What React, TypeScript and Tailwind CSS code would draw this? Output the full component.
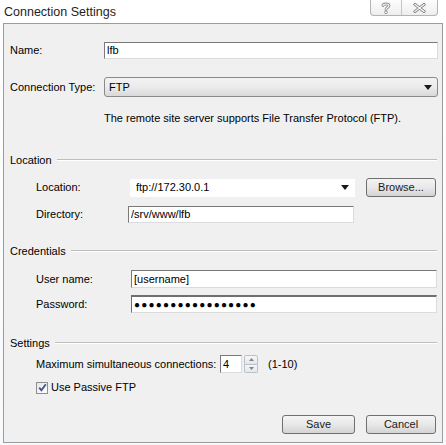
import React from 'react';

const font = { fontFamily: '"Liberation Sans", Arial, sans-serif' };

const SectionHeader = ({ title }: { title: string }) => (
    <div className="flex items-center h-[14px] pl-[6px] pr-[5px]">
        <span>{title}</span>
        <div className="flex-1 h-[2px] ml-[5px] border-t border-t-[#bdbdbd] border-b border-b-white" />
    </div>
);

const SunkenInput = ({ value, className = '' }: { value: string; className?: string }) => (
    <div className={`flex items-center bg-white border border-t-[#7a7a7a] border-l-[#7a7a7a] border-r-[#dcdcdc] border-b-[#dcdcdc] pl-[2px] ${className}`}>
        {value}
    </div>
);

const WinButton = ({ label, className = '' }: { label: string; className?: string }) => (
    <div className={`flex items-center justify-center h-[19px] rounded-[3px] border border-[#707070] bg-gradient-to-b from-[#f4f4f4] via-[#e8e8e8] to-[#d4d4d4] text-[11px] text-[#1b1b1b] ${className}`}>
        {label}
    </div>
);

const TitleGlyphs = () => (
    <div className="flex h-[16px] mr-[8px] rounded-b-[4px] border border-t-0 border-[#b4b4b4] bg-gradient-to-b from-[#fdfdfd] to-[#eeeeee] overflow-hidden">
        <div className="w-[31px] flex items-center justify-center border-r border-[#c4c4c4]">
            <svg width="10" height="12" viewBox="0 0 10 12">
                <path d="M2 3.5 C2 1.5 8 1.5 8 3.5 C8 5.5 5 5.5 5 7.5" fill="none" stroke="#8a8a8a" strokeWidth="2.8" strokeLinecap="round" />
                <path d="M2 3.5 C2 1.5 8 1.5 8 3.5 C8 5.5 5 5.5 5 7.5" fill="none" stroke="#ffffff" strokeWidth="1.1" strokeLinecap="round" />
                <circle cx="5" cy="10.3" r="1.4" fill="#ffffff" stroke="#8a8a8a" strokeWidth="0.9" />
            </svg>
        </div>
        <div className="w-[35px] flex items-center justify-center">
            <svg width="13" height="10" viewBox="0 0 13 10">
                <path d="M2 1.5 L11 8.5 M11 1.5 L2 8.5" stroke="#8a8a8a" strokeWidth="3" strokeLinecap="square" />
                <path d="M2 1.5 L11 8.5 M11 1.5 L2 8.5" stroke="#ffffff" strokeWidth="1.2" strokeLinecap="square" />
            </svg>
        </div>
    </div>
);

const Triangle = () => (
    <svg width="8" height="5" viewBox="0 0 8 5"><path d="M0 0 L8 0 L4 5 Z" fill="#1a1a1a" /></svg>
);

export default function App() {
    return (
        <div className="w-[446px] h-[445px] bg-gradient-to-b from-[#ffffff] to-[#f7f9fb] text-[11px] text-black overflow-hidden" style={font}>
            {/* Title bar */}
            <div className="flex justify-between h-[23px]">
                <div className="pl-[4px] pt-[3px] text-[12.5px] text-[#1e1e1e]">Connection Settings</div>
                <TitleGlyphs />
            </div>

            {/* Dialog body */}
            <div className="ml-[3px] w-[440px] h-[420px] border border-[#9c9c9c] bg-[#f0f0f0] flex flex-col">
                {/* Name */}
                <div className="flex items-center mt-[18px] pl-[6px] pr-[4px]">
                    <div className="w-[94px]">Name:</div>
                    <SunkenInput value="lfb" className="flex-1 h-[17px]" />
                </div>

                {/* Connection Type */}
                <div className="flex items-center mt-[18px] pl-[6px] pr-[4px]">
                    <div className="w-[94px]">Connection Type:</div>
                    <div className="flex-1 h-[20px] flex items-center justify-between rounded-[3px] border border-[#8a8a8a] bg-gradient-to-b from-[#f3f3f3] via-[#ebebeb] to-[#d9d9d9] pl-[4px] pr-[5px]">
                        <span>FTP</span>
                        <Triangle />
                    </div>
                </div>

                <div className="mt-[14px] h-[14px] pl-[100px] leading-[14px]">
                    The remote site server supports File Transfer Protocol (FTP).
                </div>

                {/* Location */}
                <div className="mt-[28px]"><SectionHeader title="Location" /></div>
                <div className="flex items-center mt-[11px] pl-[32px] pr-[6px]">
                    <div className="w-[94px]">Location:</div>
                    <div className="w-[225px] h-[18px] bg-white flex items-center justify-between pl-[6px] pr-[6px]">
                        <span>ftp://172.30.0.1</span>
                        <Triangle />
                    </div>
                    <WinButton label="Browse..." className="ml-[11px] w-[70px]" />
                </div>
                <div className="flex items-center mt-[9px] pl-[32px]">
                    <div className="w-[92px]">Directory:</div>
                    <SunkenInput value="/srv/www/lfb" className="w-[226px] h-[17px]" />
                </div>

                {/* Credentials */}
                <div className="mt-[21px]"><SectionHeader title="Credentials" /></div>
                <div className="flex items-center mt-[12px] pl-[32px] pr-[5px]">
                    <div className="w-[95px]">User name:</div>
                    <SunkenInput value="[username]" className="flex-1 h-[18px]" />
                </div>
                <div className="flex items-center mt-[7px] pl-[32px] pr-[5px]">
                    <div className="w-[95px]">Password:</div>
                    <div className="flex-1 h-[18px] flex items-center bg-white border border-t-2 border-t-[#6f6f6f] border-l-[#6f6f6f] border-r-[#dcdcdc] border-b-[#dcdcdc] pl-[2px] text-[10px] tracking-[1.2px]">
                        {'●'.repeat(17)}
                    </div>
                </div>

                {/* Settings */}
                <div className="mt-[23px]"><SectionHeader title="Settings" /></div>
                <div className="flex items-center mt-[5px] pl-[32px] h-[18px]">
                    <div className="w-[184px]">Maximum simultaneous connections:</div>
                    <SunkenInput value="4" className="w-[22px] h-[18px]" />
                    <div className="ml-[2px] w-[14px] h-[18px] flex flex-col">
                        <div className="flex-1 flex items-center justify-center border border-[#b9c2cc] rounded-t-[2px] bg-gradient-to-b from-[#f7f7f7] to-[#e6e6e6]">
                            <svg width="5" height="3" viewBox="0 0 5 3"><path d="M0 3 L5 3 L2.5 0 Z" fill="#7a8796" /></svg>
                        </div>
                        <div className="flex-1 flex items-center justify-center border border-t-0 border-[#b9c2cc] rounded-b-[2px] bg-gradient-to-b from-[#f7f7f7] to-[#e6e6e6]">
                            <svg width="5" height="3" viewBox="0 0 5 3"><path d="M0 0 L5 0 L2.5 3 Z" fill="#7a8796" /></svg>
                        </div>
                    </div>
                    <div className="ml-[10px]">(1-10)</div>
                </div>
                <div className="flex items-center mt-[8px] pl-[32px] h-[13px]">
                    <div className="w-[12px] h-[12px] border border-[#8e8f8f] bg-gradient-to-br from-[#e6e6e6] to-[#ffffff] flex items-center justify-center">
                        <svg width="9" height="9" viewBox="0 0 9 9">
                            <path d="M1.2 4.6 L3.4 7.2 L7.8 1.2" fill="none" stroke="#3d5487" strokeWidth="1.8" />
                        </svg>
                    </div>
                    <span className="ml-[3px]">Use Passive FTP</span>
                </div>

                {/* Buttons */}
                <div className="flex justify-end mt-[21px] pr-[6px]">
                    <WinButton label="Save" className="w-[73px]" />
                    <WinButton label="Cancel" className="ml-[11px] w-[70px]" />
                </div>
            </div>
        </div>
    );
}
